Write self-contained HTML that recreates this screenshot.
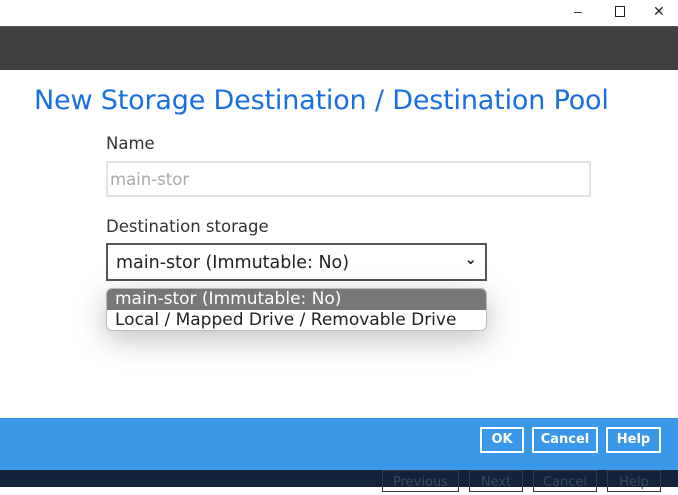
<!DOCTYPE html><html><head><style>
*{margin:0;padding:0;box-sizing:border-box}
body{width:678px;height:487px;overflow:hidden;background:#fff;font-family:"DejaVu Sans","Liberation Sans",sans-serif;position:relative}
.a{position:absolute}
.btn{position:absolute;border:2px solid #fff;color:#fff;font-size:13px;font-weight:bold;text-align:center;line-height:22px;height:26px}
.bb{position:absolute;border:1px solid #3a3a3a;color:#3a4a5e;font-size:13px;text-align:center;top:470px;height:22px;line-height:24px}
</style></head><body>
<div class="a" style="left:568px;top:0;width:110px;height:26px;font-size:14px;color:#222;font-family:'Liberation Sans'">
<span class="a" style="left:6px;top:3px">–</span>
<span class="a" style="left:47px;top:6px;width:10px;height:11px;border:1.5px solid #222"></span>
<span class="a" style="left:85px;top:3px">✕</span></div>
<div class="a" style="left:0;top:26px;width:678px;height:44px;background:#414141;border-top:1px solid #555"></div>
<div class="a" style="left:34px;top:85px;font-size:27px;color:#1a6fe0;letter-spacing:-0.18px">New Storage Destination / Destination Pool</div>
<div class="a" style="left:106px;top:134px;font-size:16.5px;color:#333">Name</div>
<div class="a" style="left:106px;top:161px;width:485px;height:36px;border:2px solid #e4e4e4;font-size:16.5px;color:#aaa;padding:7px 2px">main-stor</div>
<div class="a" style="left:106px;top:217px;font-size:16.5px;color:#333">Destination storage</div>
<div class="a" style="left:106px;top:243px;width:381px;height:38px;border:2px solid #555;font-size:17.5px;color:#222;padding:8px 8px">main-stor (Immutable: No)<span class="a" style="right:8px;top:5px;font-size:15px;font-weight:bold">⌄</span></div>
<div class="a" style="left:106px;top:288px;width:381px;height:43px;border:1px solid #bbb;border-radius:6px;overflow:hidden;box-shadow:0 8px 30px rgba(0,0,0,.25);background:#fff;font-size:17px">
<div style="background:#777;color:#fff;height:21px;line-height:21px;padding-left:8px">main-stor (Immutable: No)</div>
<div style="color:#222;height:21px;line-height:21px;padding-left:8px">Local / Mapped Drive / Removable Drive</div></div>
<div class="a" style="left:0;top:418px;width:678px;height:52px;background:#3b97e8"></div>
<div class="btn" style="left:480px;top:427px;width:44px">OK</div>
<div class="btn" style="left:532px;top:427px;width:66px">Cancel</div>
<div class="btn" style="left:606px;top:427px;width:55px">Help</div>
<div class="a" style="left:0;top:470px;width:678px;height:17px;background:#13233b"></div>
<div class="bb" style="left:382px;width:77px">Previous</div>
<div class="bb" style="left:469px;width:54px">Next</div>
<div class="bb" style="left:533px;width:64px">Cancel</div>
<div class="bb" style="left:607px;width:54px">Help</div>
</body></html>
